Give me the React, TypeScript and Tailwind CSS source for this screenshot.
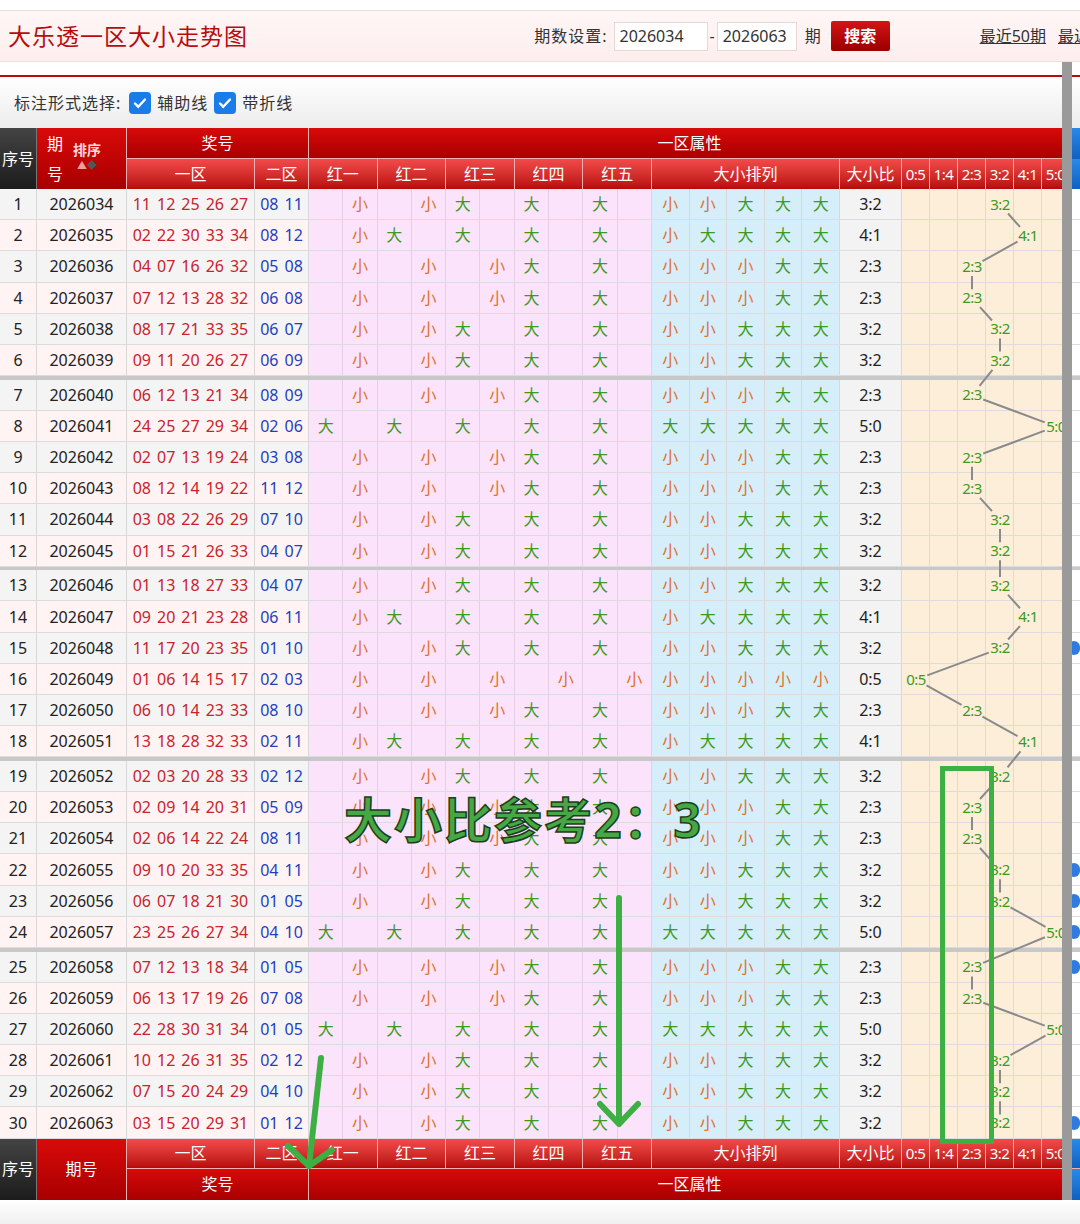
const RAW = [
  "11 12 25 26 27|08 11", "02 22 30 33 34|08 12", "04 07 16 26 32|05 08", "07 12 13 28 32|06 08",
  "08 17 21 33 35|06 07", "09 11 20 26 27|06 09", "06 12 13 21 34|08 09", "24 25 27 29 34|02 06",
  "02 07 13 19 24|03 08", "08 12 14 19 22|11 12", "03 08 22 26 29|07 10", "01 15 21 26 33|04 07",
  "01 13 18 27 33|04 07", "09 20 21 23 28|06 11", "11 17 20 23 35|01 10", "01 06 14 15 17|02 03",
  "06 10 14 23 33|08 10", "13 18 28 32 33|02 11", "02 03 20 28 33|02 12", "02 09 14 20 31|05 09",
  "02 06 14 22 24|08 11", "09 10 20 33 35|04 11", "06 07 18 21 30|01 05", "23 25 26 27 34|04 10",
  "07 12 13 18 34|01 05", "06 13 17 19 26|07 08", "22 28 30 31 34|01 05", "10 12 26 31 35|02 12",
  "07 15 20 24 29|04 10", "03 15 20 29 31|01 12",
];

const rows = RAW.map((r, i) => {
  const [a, b] = r.split("|");
  const reds = a.split(" ");
  const big = reds.map((n) => parseInt(n, 10) >= 18);
  const nb = big.filter(Boolean).length;
  return { seq: i + 1, issue: String(2026034 + i), reds, blues: b.split(" "), big, nb };
});

const RATIOS = ["0:5", "1:4", "2:3", "3:2", "4:1", "5:0"];
const ROW_H = 31.2;
const SEP = 3.5;
const centerY = (i: number) => i * ROW_H + Math.floor(i / 6) * SEP + ROW_H / 2;

const F = { fontFamily: '"Noto Sans", "Noto Sans CJK SC", sans-serif' };
const HEAD_TOP = "bg-gradient-to-b from-[#d90a0a] to-[#a80000]";
const HEAD_SUB = "bg-gradient-to-b from-[#f24a4a] to-[#b80808]";

function BigSmall({ big }: { big: boolean }) {
  return big ? <span className="text-[#3c9a1c]">大</span> : <span className="text-[#e0702a]">小</span>;
}

function Row({ r }: { r: (typeof rows)[number] }) {
  const odd = r.seq % 2 === 1;
  const base = odd ? "bg-[#f4f4f4]" : "bg-[#fff3f3]";
  const cell = "h-full flex items-center justify-center border-r border-[#d8d8d8] shrink-0";
  return (
    <div className="flex h-[31.2px] border-b border-[#dcdcdc] text-[16px]">
      <div className={`${cell} w-[37px] ${base} text-[#222]`}>{r.seq}</div>
      <div className={`${cell} w-[90px] ${base} text-[#222]`}>{r.issue}</div>
      <div className={`${cell} w-[128px] ${base} text-[#c8232c] gap-[6px]`}>
        {r.reds.map((n, k) => <span key={k}>{n}</span>)}
      </div>
      <div className={`${cell} w-[54px] ${base} text-[#1f3fbf] gap-[6px]`}>
        {r.blues.map((n, k) => <span key={k}>{n}</span>)}
      </div>
      {r.big.map((b, k) => (
        <div key={k} className="flex h-full">
          <div className={`${cell} w-[34.3px] bg-[#fbe3fb] border-[#e4cfe4]`}>{b && <BigSmall big />}</div>
          <div className={`${cell} w-[34.3px] bg-[#fbe3fb] ${k === 4 ? "border-[#d8d8d8]" : "border-[#e4cfe4]"}`}>{!b && <BigSmall big={false} />}</div>
        </div>
      ))}
      {r.big.map((b, k) => (
        <div key={k} className={`${cell} w-[37.6px] bg-[#d6eefa] border-[#c6dcea]`}><BigSmall big={b} /></div>
      ))}
      <div className={`${cell} w-[62px] bg-[#f3f3f3] text-[#222]`}>{r.nb}:{5 - r.nb}</div>
      {RATIOS.map((x) => (
        <div key={x} className={`${cell} w-[28px] bg-[#fdeeda] border-[#ead8c0]`} />
      ))}
      <div className="w-[10px] h-full bg-white shrink-0 flex items-center">
        {[15, 22, 23, 24, 25, 30].includes(r.seq) && <div className="w-[14px] h-[14px] rounded-full bg-[#2f7be0] -ml-[2px]" />}
      </div>
    </div>
  );
}

function SubHeader() {
  const c = `${HEAD_SUB} h-full flex items-center justify-center border-r border-[#f5b0b0] text-white shrink-0`;
  return (
    <>
      <div className={`${c} w-[128px]`}>一区</div>
      <div className={`${c} w-[54px]`}>二区</div>
      {["红一", "红二", "红三", "红四", "红五"].map((t) => (
        <div key={t} className={`${c} w-[68.6px]`}>{t}</div>
      ))}
      <div className={`${c} w-[188px]`}>大小排列</div>
      <div className={`${c} w-[62px]`}>大小比</div>
      {RATIOS.map((t) => (
        <div key={t} className={`${c} w-[28px] text-[15px] tracking-[-0.5px]`}>{t}</div>
      ))}
      <div className="w-[10px] h-full bg-gradient-to-b from-[#2a8ae8] to-[#1060c0] shrink-0" />
    </>
  );
}

export default function App() {
  const chartW = 168;
  const pts = rows.map((r, i) => ({ x: r.nb * 28 + 14, y: centerY(i) }));
  return (
    <div className="w-[1080px] h-[1224px] bg-white overflow-hidden relative" style={F}>
      {/* top bar */}
      <div className="h-[10px]" />
      <div className="h-[52px] bg-gradient-to-b from-[#fff6f6] to-[#fdeeee] border-y border-[#f0dede] flex items-center pl-[8px]">
        <div className="text-[23px] text-[#b80c0c] tracking-[1px]">大乐透一区大小走势图</div>
        <div className="ml-auto flex items-center text-[16px] text-[#333]">
          <span className="tracking-[1px]">期数设置:</span>
          <div className="ml-[6px] w-[94px] h-[29px] bg-white border border-[#ecd6d6] flex items-center px-[5px]">2026034</div>
          <span className="mx-[2px]">-</span>
          <div className="w-[80px] h-[29px] bg-white border border-[#ecd6d6] flex items-center px-[5px]">2026063</div>
          <span className="ml-[8px]">期</span>
          <div className="ml-[10px] w-[59px] h-[30px] bg-gradient-to-b from-[#d41414] to-[#9a0000] rounded-[2px] text-white font-bold flex items-center justify-center">搜索</div>
          <span className="ml-[90px] underline">最近50期</span>
          <span className="ml-[12px] underline whitespace-nowrap w-[22px] overflow-hidden">最近</span>
        </div>
      </div>
      <div className="h-[13px]" />
      <div className="h-[2px] bg-[#b80c0c]" />
      <div className="h-[51px] bg-gradient-to-b from-white to-[#ececec] flex items-center pl-[14px] text-[16px] text-[#333] tracking-[1px]">
        标注形式选择:
        <span className="ml-[8px] w-[22px] h-[22px] rounded-[4px] bg-[#1a7ce8] flex items-center justify-center">
          <svg width="16" height="16" viewBox="0 0 16 16"><path d="M3 8.5l3.2 3.2L13 4.5" stroke="white" strokeWidth="2.4" fill="none" strokeLinecap="round" /></svg>
        </span>
        <span className="ml-[6px]">辅助线</span>
        <span className="ml-[6px] w-[22px] h-[22px] rounded-[4px] bg-[#1a7ce8] flex items-center justify-center">
          <svg width="16" height="16" viewBox="0 0 16 16"><path d="M3 8.5l3.2 3.2L13 4.5" stroke="white" strokeWidth="2.4" fill="none" strokeLinecap="round" /></svg>
        </span>
        <span className="ml-[6px]">带折线</span>
      </div>

      {/* table header */}
      <div className="flex h-[61px] text-[16px] text-white">
        <div className="w-[37px] h-full bg-gradient-to-b from-[#444] to-[#1c1c1c] flex items-center justify-center border-r border-[#777] shrink-0 whitespace-nowrap">序号</div>
        <div className={`w-[90px] h-full ${HEAD_TOP} border-r border-[#f5b0b0] flex items-center pl-[10px] gap-[10px] shrink-0`}>
          <div className="flex flex-col leading-[30px]"><span>期</span><span>号</span></div>
          <div className="flex flex-col items-center -mt-[8px]">
            <span className="text-[14px] font-bold text-[#ffd8d8]">排序</span>
            <span className="text-[10px] leading-none"><span className="text-[#e8a0a0]">▲</span><span className="text-[#555]">◆</span></span>
          </div>
        </div>
        <div className="flex flex-col h-full">
          <div className="flex h-[31px]">
            <div className={`${HEAD_TOP} w-[182px] flex items-center justify-center border-r border-b border-[#f5b0b0]`}>奖号</div>
            <div className={`${HEAD_TOP} w-[761px] flex items-center justify-center border-b border-[#f5b0b0]`}>一区属性</div>
            <div className="w-[10px] bg-gradient-to-b from-[#2a8ae8] to-[#1060c0]" />
          </div>
          <div className="flex h-[30px]"><SubHeader /></div>
        </div>
      </div>

      {/* body */}
      <div className="relative">
        {rows.map((r, i) => (
          <div key={r.seq}>
            {i > 0 && i % 6 === 0 && <div className="h-[3.5px] bg-[#c8c8c8]" />}
            <Row r={r} />
          </div>
        ))}
        <svg className="absolute top-0 left-[902px] z-10 pointer-events-none" width={chartW} height={952}>
          {pts.slice(1).map((p, i) => {
            const q = pts[i];
            const dx = p.x - q.x, dy = p.y - q.y, len = Math.hypot(dx, dy);
            const s = (dx === 0 ? 9 : 12) / len;
            return (
              <line key={i} x1={q.x + dx * s} y1={q.y + dy * s} x2={p.x - dx * s} y2={p.y - dy * s} stroke="#8a8a8a" strokeWidth="2" />
            );
          })}
        </svg>
        <div className="absolute inset-0 z-20 pointer-events-none">
          {pts.map((p, i) => (
            <div key={i} className="absolute text-[15px] text-[#3c9a1c] leading-none tracking-[-0.5px] w-[26px] text-center" style={{ left: 902 + p.x - 13, top: p.y - 8 }}>
              {RATIOS[rows[i].nb]}
            </div>
          ))}
        </div>
      </div>

      {/* footer */}
      <div className="flex h-[61px] text-[16px] text-white">
        <div className="w-[37px] h-full bg-gradient-to-b from-[#444] to-[#1c1c1c] flex items-center justify-center border-r border-[#777] shrink-0 whitespace-nowrap">序号</div>
        <div className={`w-[90px] h-full ${HEAD_TOP} border-r border-[#f5b0b0] flex items-center justify-center shrink-0`}>期号</div>
        <div className="flex flex-col h-full">
          <div className="flex h-[30px] border-b border-[#f5b0b0]"><SubHeader /></div>
          <div className="flex h-[31px]">
            <div className={`${HEAD_TOP} w-[182px] flex items-center justify-center border-r border-[#f5b0b0]`}>奖号</div>
            <div className={`${HEAD_TOP} w-[761px] flex items-center justify-center`}>一区属性</div>
            <div className="w-[10px] bg-gradient-to-b from-[#2a8ae8] to-[#1060c0]" />
          </div>
        </div>
      </div>
      <div className="h-[24px] bg-gradient-to-b from-white to-[#f0f0f0]" />

      {/* scrollbar */}
      <div className="absolute left-[1062px] top-[62px] w-[10px] h-[1138px] bg-[#9a9a9a] z-30" />

      {/* annotations */}
      <div className="absolute left-[344px] top-[784px] z-40 text-[48px] font-bold text-[#45a845] [-webkit-text-stroke:1.5px_#1d3d1d] tracking-[2px] whitespace-nowrap">
        大小比参考2：3
      </div>
      <div className="absolute left-[940px] top-[766px] w-[54px] h-[378px] border-[5px] border-[#3cb043] z-40" />
      <svg className="absolute left-0 top-0 z-40 pointer-events-none" width="1080" height="1224">
        <g stroke="#3cb043" strokeWidth="6" fill="none" strokeLinecap="round" strokeLinejoin="round">
          <path d="M619 898 L619 1122" />
          <path d="M600 1104 L619 1124 L638 1104" />
          <path d="M321 1058 L309 1166" />
          <path d="M288 1146 L309 1166 L332 1150" />
        </g>
      </svg>
    </div>
  );
}
